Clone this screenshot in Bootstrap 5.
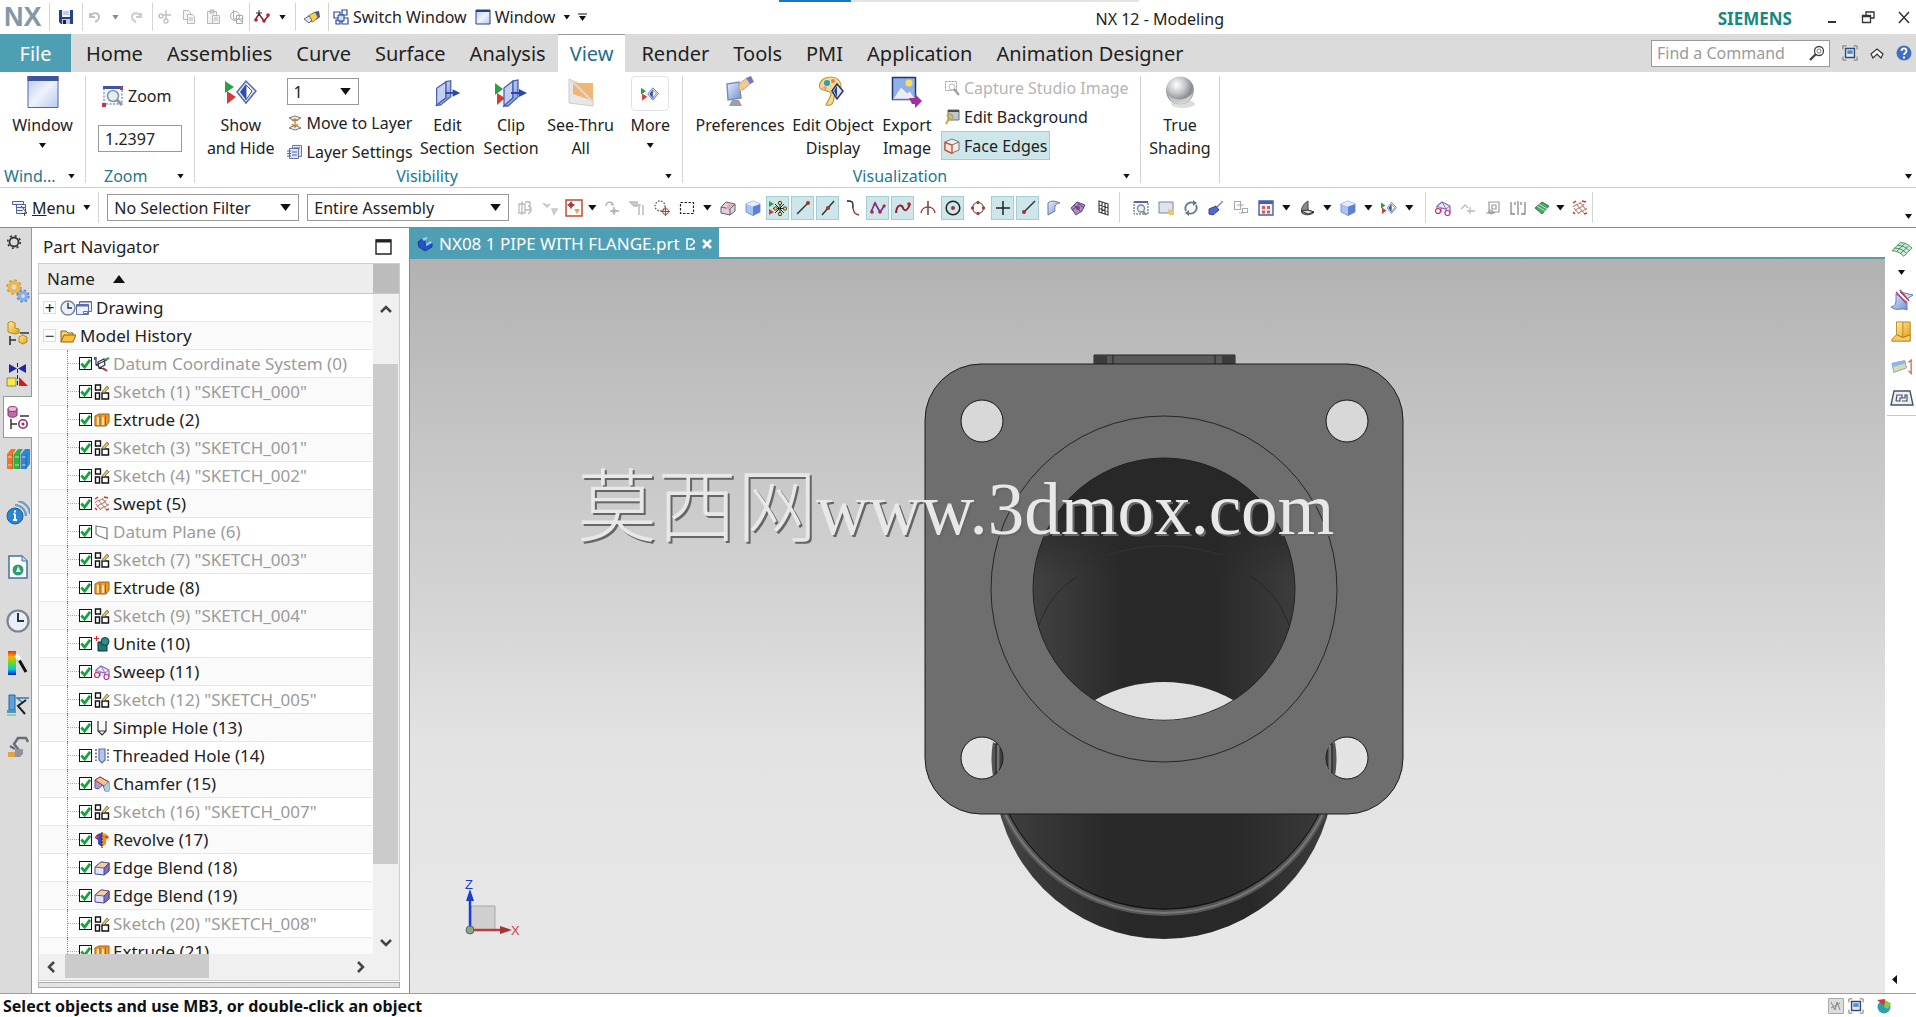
<!DOCTYPE html>
<html lang="en">
<head>
<meta charset="utf-8">
<meta name="viewport" content="width=device-width, initial-scale=1">
<title>NX 12 - Modeling</title>
<link href="https://cdn.jsdelivr.net/npm/bootstrap@5.3.0/dist/css/bootstrap.min.css" rel="stylesheet">
<style>
:root{--teal:#4f9fb4;--ink:#222}
body{font-family:"Noto Sans","Open Sans",sans-serif;font-size:16px;line-height:24px;color:var(--ink);background:#fff;overflow:hidden}
button,input,select{font-family:inherit;font-size:inherit;color:inherit}
button{background:none;border:0;padding:0}
svg{display:block;flex:none}
.i16{width:16px;height:16px}.i24{width:24px;height:24px}.i32{width:32px;height:32px}
.tri{width:9px;height:6px;flex:none;background:#111;clip-path:polygon(0 0,100% 0,50% 100%)}
.tri.sm{width:7px;height:5px}
.off{color:#b4b4b4!important}
.vsep{width:1px;align-self:stretch;background:#d4d4d4;flex:none}
.titlebar{height:34px}
.tb-right{width:692px}
.tb-left .vsep{margin:3px 0}
.qb{width:24px;display:flex;justify-content:center;align-items:center}
.qb.drop{width:17px}
.progress-strip{left:50%;top:0;width:360px;height:2px;margin-left:-179px;background:#e4e4e4}
.progress-strip i{display:block;width:72px;height:2px;background:#1678c2}
.nxlogo{font:700 27px/28px "Liberation Sans",sans-serif;color:#8397a5;width:49px}
.brand{font-weight:700;font-size:17px;color:#17877f}
.tabbar{height:38px;background:#dbdbdb}
.tabbar .nav-link{font-size:20px;line-height:40px;height:38px;padding:0 12px;color:#222;border-radius:0}
.tabbar .file{background:var(--teal);color:#fff;width:71px;padding:0;text-align:center;margin-right:3px}
.tabbar .active{background:#fff;color:#1f6f8b;border-top:1px solid #999;line-height:38px}
.findbox{width:179px;height:27px;border:1px solid #999;background:#fff}
.findbox input{border:0;outline:0;width:140px;padding:0 0 0 5px;background:none}
.findbox input::placeholder{color:#9a9a9a;opacity:1}
.ribbon{height:116px;border-bottom:1px solid #ccd;flex:none}
.rgroup{border-right:1px solid #d4d4d4;margin:4px 0}
.g-window{width:86px}.g-zoom{width:109px}.g-vis{width:488px}.g-visual{width:458px}.g-true{width:79px}
.rbody{height:88px;display:flex}
.rlabel{height:24px;display:flex;align-items:center;color:#23788e;padding:0 10px 0}
.g-zoom .rlabel{padding-left:18px}
.rbtn{display:flex;flex-direction:column;align-items:center;line-height:23px;white-space:nowrap}
.rbtn svg{margin-bottom:6px}
.rbtn .tri{margin-top:6px}
.w60{width:60px}.w64{width:64px}.w76{width:76px}.w88{width:88px}.w98{width:98px}
.laycol{width:138px}
.laycol .nxselect{width:72px;margin:2px 0 3px}
.viscol{margin-top:-3px}
.scalebox{width:84px;margin:auto 0 12px}
.moreicon{width:38px;height:35px;margin-bottom:3px;display:flex;align-items:center;justify-content:center}
.moreicon svg{margin:0}
.lrow{display:flex;align-items:center;gap:4px;height:29px;white-space:nowrap;padding:0 3px}
.lrow.on,.tool.on{background:#cde6ea;outline:1px solid #a6ccd4;outline-offset:-1px}
.nxselect,.nxbox{border:1px solid #999;border-radius:0;height:27px;padding:0 24px 0 6px;background-color:#fff;line-height:24px}
.nxselect{-webkit-appearance:none;appearance:none;background-image:url("data:image/svg+xml,%3Csvg xmlns='http://www.w3.org/2000/svg' viewBox='0 0 12 8'%3E%3Cpath d='M0 0h12L6 8z' fill='%23111'/%3E%3C/svg%3E");background-repeat:no-repeat;background-position:right 7px center;background-size:11px 7px}
.sel-filter{width:192px}.sel-scope{width:202px}
.selbar{height:40px;border-bottom:1px solid #8a8a8a;flex:none}
.tool{width:23px;height:24px;margin:0 1px;display:flex;align-items:center;justify-content:center;flex:none}
.tool.arrow{width:14px}
.selbar .vsep{margin:4px 0}
.work,.minh{min-height:0}
.rail{width:32px;background:#dbdbdb;border-right:1px solid #999;flex:none;padding-top:2px}
.rail button{width:100%;height:42px;display:flex;align-items:center;justify-content:center;flex:none;padding-left:4px}
.rail .gearbtn{height:24px;margin-bottom:16px;padding:0 4px 0 0}
.rail .cur{background:#fff;border:1px solid #999;border-right:0;margin-left:3px;width:29px;padding:0}
.rail .mt-a{margin-top:12px}
.navpanel{width:378px;border-right:1px solid #888;padding:0 9px 5px 6px;flex:none}
.navtitle{height:36px;padding:2px 8px 0 5px;font-size:17px}
.treebox{border:1px solid #ccc}
.treehead{height:30px;background:#ededed;border-bottom:1px solid #c8c8c8;font-size:17px}
.treehead .corner{width:26px;background:#bcbcbc}
.trow{height:28px;display:flex;align-items:center;font-size:17px;border-bottom:1px solid #e6e6e6;white-space:nowrap;flex:none}
.trow:nth-child(even){background:#fafafa}
.rows{min-height:0;overflow:hidden;list-style:none;margin:0;padding:0}
.leaf{padding-left:28px}
.leaf .stub{width:12px;height:28px;border-left:1px dotted #888;background:linear-gradient(90deg,#aaa 50%,transparent 0) 0 50%/2px 1px repeat-x;flex:none}
.leaf label{display:flex;align-items:center}
.leaf label svg{margin:0 3px 0 2px}
.leaf .form-check-input{margin:0;width:13px;height:13px;border:1px solid #111;border-radius:0;background-color:#fff;flex:none}
.leaf .form-check-input:checked{background:#fff url("data:image/svg+xml,%3Csvg xmlns='http://www.w3.org/2000/svg' viewBox='0 0 12 12'%3E%3Cpath d='M1.500 6l3.500 4 6-8' fill='none' stroke='%231ba23e' stroke-width='3'/%3E%3C/svg%3E") center/11px;border-color:#111}
.dim{color:#9b9b9b}
.exp{width:13px;height:13px;border:1px solid #ddd;line-height:9px;display:flex;align-items:center;justify-content:center;background:#fff}
.vscroll{width:26px;background:#f0f0f0;flex:none}
.vscroll .thumb{height:500px;background:#cbcbcb;margin:40px 1px 0 0}
.vscroll button,.hscroll button{display:flex;align-items:center;justify-content:center;width:26px;flex:none}
.hscroll{height:26px;background:#f0f0f0}
.hscroll .thumb{width:144px;background:#cbcbcb;height:24px}
.footbar{height:6px;border:1px solid #aaa;background:#e4e4e4;margin-top:1px;flex:none}
.doctabs{height:31px;border-bottom:2px solid #5f98a8;flex:none}
.doctab{background:var(--teal);color:#fff;padding:0 7px;gap:6px;height:31px;display:flex;align-items:center;text-decoration:none;font-size:17px}
.scene{background:linear-gradient(#b2b2b2,#c6c6c6 26%,#d4d4d4 47%,#e3e3e3 66%,#e8e8e8);min-height:0;flex:1 1 0}
.scene svg{width:100%;height:100%}
.mark-text{fill:#e8e8e8;filter:drop-shadow(2px 2px 0 #666)}
.siderail{width:31px;flex:none;padding:7px 0 0 2px}
.siderail button{height:27px;width:100%;display:flex;align-items:center;justify-content:center;flex:none}
.statusbar{height:24px;border-top:1px solid #a29aa0;flex:none;padding-left:3px}
.statusbar b{font-size:16px;line-height:22px;color:#111}
</style>
</head>
<body class="d-flex flex-column vh-100">
<svg width="0" height="0" class="position-absolute" aria-hidden="true">
<defs>
<linearGradient id="gw" x1="0" y1="0" x2="1" y2="1"><stop offset="0" stop-color="#b9c9ee"/><stop offset=".5" stop-color="#eef3fb"/><stop offset="1" stop-color="#b9c9ee"/></linearGradient>
<linearGradient id="gb" x1="0" y1="0" x2="1" y2="1"><stop offset="0" stop-color="#e8f0ff"/><stop offset="1" stop-color="#6f8fd8"/></linearGradient>
<linearGradient id="gy" x1="0" y1="0" x2="1" y2="1"><stop offset="0" stop-color="#ffe9a0"/><stop offset="1" stop-color="#e6a21a"/></linearGradient>
<radialGradient id="gs" cx=".38" cy=".3" r=".7"><stop offset="0" stop-color="#fff"/><stop offset=".45" stop-color="#c2c6ca"/><stop offset=".8" stop-color="#85898c"/><stop offset="1" stop-color="#b9bcbf"/></radialGradient>
<linearGradient id="bore" x1="0" x2="1"><stop offset="0" stop-color="#414141"/><stop offset=".14" stop-color="#383838"/><stop offset=".34" stop-color="#292929"/><stop offset=".7" stop-color="#292929"/><stop offset="1" stop-color="#3c3c3c"/></linearGradient>
<linearGradient id="boretop" x1="0" y1="0" x2="0" y2="1"><stop offset="0" stop-color="#282828"/><stop offset=".2" stop-color="#282828"/><stop offset=".45" stop-color="#282828" stop-opacity="0"/></linearGradient>
<linearGradient id="rim" x1="0" x2="1"><stop offset="0" stop-color="#4a4a4a"/><stop offset=".14" stop-color="#383838"/><stop offset=".4" stop-color="#282828"/><stop offset=".75" stop-color="#282828"/><stop offset="1" stop-color="#3e3e3e"/></linearGradient>
<linearGradient id="rain" x1="0" y1="0" x2="0" y2="1"><stop offset="0" stop-color="#f02a10"/><stop offset=".25" stop-color="#ffb000"/><stop offset=".5" stop-color="#58e020"/><stop offset=".75" stop-color="#10c8e8"/><stop offset="1" stop-color="#1020c0"/></linearGradient>
<symbol id="save" viewBox="0 0 16 16"><path d="M1 1h14v14H3l-2-2z" fill="#27408b"/><path d="M4 1h8v7H4z" fill="#eef3ff"/><path d="M5 3h6M5 5h6" stroke="#9ab"/><path d="M4 10h8v5H4z" fill="#c6cbd6"/><path d="M5 11h3v4H5z" fill="#223"/></symbol>
<symbol id="undo" viewBox="0 0 16 16"><path d="M3 9V4M3 8h5M3 8c2-5 9-5 9 0 0 3-2 4-4 5" fill="none" stroke="#c0c0c0" stroke-width="2"/></symbol>
<symbol id="redo" viewBox="0 0 16 16"><path d="M13 9V4M13 8H8M13 8c-2-5-9-5-9 0 0 3 2 4 4 5" fill="none" stroke="#ccc" stroke-width="2"/></symbol>
<symbol id="cut" viewBox="0 0 16 16"><g fill="none" stroke="#c2c2c2" stroke-width="1.500"><path d="M9 1v9M14 6H5"/><circle cx="4" cy="7" r="2"/><circle cx="9" cy="12" r="2"/></g></symbol>
<symbol id="copy" viewBox="0 0 16 16"><g fill="#f5f5f5" stroke="#b8b8b8"><path d="M2.500 1.500h5l2 2v7h-7z"/><path d="M6.500 5.500h5l2 2v7h-7z"/><path d="M8 9h4M8 11h4"/></g></symbol>
<symbol id="paste" viewBox="0 0 16 16"><g fill="#f2f2f2" stroke="#b8b8b8"><path d="M2.500 2.500h9v12h-9z"/><path d="M5 1h4v3H5z" fill="#ccc"/><path d="M7.500 6.500h7v8h-7z"/><path d="M9 9h4M9 11h4"/></g></symbol>
<symbol id="cp2" viewBox="0 0 16 16"><g fill="none" stroke="#a8a8a8"><path d="M4.500 1v9h10M7.500 6.500h6v8h-6z"/><circle cx="6" cy="7" r="4.500"/><path d="m9 9 4 4"/></g></symbol>
<symbol id="spline" viewBox="0 0 16 16"><path d="M1 11 5 5l5 7 5-6" fill="none" stroke="#7a2030" stroke-width="1.500"/><path d="M5 1v6M2 4h6" stroke="#222"/><g fill="#c02030"><circle cx="2" cy="11" r="1.800"/><circle cx="10" cy="12" r="1.800"/><circle cx="14" cy="6" r="1.800"/></g></symbol>
<symbol id="spl2" viewBox="0 0 16 16"><path d="M1 12 5 3l5 9 5-7" fill="none" stroke="#6a2ca0" stroke-width="1.600"/><g fill="#c02030"><circle cx="2" cy="12" r="1.800"/><circle cx="5" cy="4" r="1.500"/><circle cx="10" cy="12" r="1.800"/><circle cx="14" cy="6" r="1.600"/></g></symbol>
<symbol id="tag" viewBox="0 0 16 16"><path d="m10 3 5-1 1 6-4 3z" fill="#3951b0"/><path d="m4 7 7-4 3 5-5 5-3-1z" fill="#f4cf50" stroke="#7c6420" stroke-width=".8"/><path d="m0 10 5-3 3 4-3 3z" fill="#dfe5f5" stroke="#667"/></symbol>
<symbol id="switch" viewBox="0 0 16 16"><g fill="#fff" stroke="#2c4a9a" stroke-width="1.200"><path d="M1 3h6v6H1zM9 1h5v5H9zM9 9h6v6H9zM3 11h4v4H3z"/></g><path d="M5 6h6v6H5z" fill="#cfe0fa" stroke="#1a3a9a"/></symbol>
<symbol id="win" viewBox="0 0 16 16"><path d="M1 1h14v14H1z" fill="url(#gw)" stroke="#27408b"/><path d="M1 1h14v2H1z" fill="#27408b"/></symbol>
<symbol id="winbig" viewBox="0 0 32 32"><path d="M1 .5h30v31H1z" fill="url(#gw)" stroke="#4a64ae"/><path d="M.500 0h31v5H.500z" fill="#3b55a0"/></symbol>
<symbol id="zoomb" viewBox="0 0 22 22"><path d="M2 2h18v17H2z" fill="#f6f9ff" stroke="#4d6fd0" stroke-dasharray="2 1.500"/><path d="M1 1h20v3H1z" fill="#3b55a0"/><circle cx="11" cy="11" r="5.500" fill="#e5eef2" stroke="#8d969c" stroke-width="1.600"/><path d="m15 15 5 5" stroke="#8d969c" stroke-width="3"/><path d="M0 18h4v4H0zM18 2h3v3h-3z" fill="#cc3344"/></symbol>
<symbol id="shade" viewBox="0 0 32 32"><path d="M0 5l9 6-9 6z" fill="#2da043"/><path d="M2 15l9 6-9 7z" fill="#d83a3a"/><path d="M12 16 21 5l10 10-10 12z" fill="#dce6f8" stroke="#5a6aa6" stroke-width="1.500"/><path d="m15 16 6-8v16z" fill="#2b4fa8"/><path d="m21 9 6 6-6 9z" fill="#fff" stroke="#4a5a96"/></symbol>
<symbol id="mvl" viewBox="0 0 16 16"><g fill="#f2ecdf" stroke="#777"><path d="m2 3 6-2 6 2-6 3zM2 13l6-3 6 3-6 2z"/></g><path d="M8 4v7M5 6l3-2 3 2M5 9l3 3 3-3" fill="none" stroke="#b98740" stroke-width="1.300"/></symbol>
<symbol id="lay" viewBox="0 0 16 16"><g fill="#dfe6f8" stroke="#6478b0"><path d="M5.500 1.500h9v11h-9z"/><path d="M2.500 4.500h9v10h-9z"/></g><path d="M0 7h4M0 9.500h4M0 12h4M5 8h5M5 11h5M7 4h6" stroke="#4d5f98"/></symbol>
<symbol id="edsec" viewBox="-3 -3 34 32"><path d="M3 9 13 2v17L3 27z" fill="#c2d0f2" stroke="#4a5fae" stroke-width="1.300"/><path d="m13 2 5-1v17l-11 9H3l10-8z" fill="url(#gb)" stroke="#4a5fae" stroke-width="1.300"/><path d="M12 14h10" stroke="#2b48a6" stroke-width="2"/><path d="m20 10 8 4-8 4z" fill="#2b48a6"/></symbol>
<symbol id="clsec" viewBox="0 -3 32 32"><path d="M0 4l8 6-8 6z" fill="#2da043"/><path d="M2 14l8 5-8 7z" fill="#d83a3a"/><path d="M9 9 18 2v17L9 27z" fill="#c2d0f2" stroke="#4a5fae" stroke-width="1.300"/><path d="m18 2 5-1v17l-10 9H9l9-8z" fill="url(#gb)" stroke="#4a5fae" stroke-width="1.300"/><path d="M16 14h9" stroke="#2b48a6" stroke-width="2"/><path d="m24 10 8 4-8 4z" fill="#2b48a6"/></symbol>
<symbol id="seeth" viewBox="-2 -2 32 32"><path d="m2 1 6 3v12l18 5v7L2 25z" fill="#e9e7e6" stroke="#cfcaca"/><path d="M6 3 12 5h14v18L6 16z" fill="#f1b673"/><path d="m5 3 21 21" stroke="#e2d8d0" stroke-width="2"/></symbol>
<symbol id="pref" viewBox="0 0 32 32"><path d="m3 8 12-2 2 16-13 2z" fill="url(#gb)" stroke="#7f8fb4" stroke-width="1.500"/><path d="M8 24h7l3 6H5z" fill="#9a9fa8"/><path d="m15 8 8-6 4 5-7 6-5 2z" fill="#f2c795" stroke="#c8a070"/><path d="m22 2 5-2 3 6-4 2z" fill="#6d79c8"/></symbol>
<symbol id="palette" viewBox="0 0 32 32"><path d="M14 1C5 1 1 8 3 12c2 3 7 2 10 4 3 2-1 6-4 13 6 2 8-3 8-8 6-2 7-6 7-11S20 1 14 1z" fill="#f4dc8e" stroke="#c29a45" stroke-width="1.200"/><circle cx="10" cy="7" r="3" fill="#2aa0ba"/><circle cx="16" cy="5" r="2" fill="#e8805a"/><circle cx="8" cy="12" r="2" fill="#f19a9a"/><path d="m15 15 5-7 6 7-6 8z" fill="#dde6f8" stroke="#27336e" stroke-width="1.500"/><path d="m17 15 3-5v11z" fill="#27408b"/></symbol>
<symbol id="export" viewBox="0 0 32 32"><path d="M1.500 1.500h23v22h-23z" fill="#8fb0ea" stroke="#26356b" stroke-width="1.500"/><circle cx="18" cy="7" r="3.500" fill="#fae055"/><path d="m2 23 8-12 6 6 3-2 5 8z" fill="#e9edf6" stroke="#aab2cc"/><path d="M18 22h6v-4l7 7-7 7v-4h-3z" fill="#a02ca6"/></symbol>
<symbol id="capt" viewBox="0 0 16 16"><path d="M1.500 1.500h11v9h-11z" fill="none" stroke="#999" stroke-dasharray="2 1"/><circle cx="8" cy="7" r="3" fill="none" stroke="#bbb"/><path d="m10 9 5 6" stroke="#999" stroke-width="2"/></symbol>
<symbol id="editbg" viewBox="0 0 16 16"><path d="M4 1h11v10H4z" fill="#bcc7d4" stroke="#67717e"/><path d="M4 1h11v2H4z" fill="#4a4f5a"/><path d="m2 15 4-7M3 7a3 3 0 1 1 4 4" fill="none" stroke="#d0a830" stroke-width="2"/></symbol>
<symbol id="facee" viewBox="0 0 16 16"><path d="m1 4 7-3 7 3v8l-7 3-7-3z" fill="#f0eee9" stroke="#777"/><path d="M1 4.500 8 7v8.500L1 12z" fill="#fbe9df" stroke="#c6553a" stroke-width="1.400"/><path d="m8 7 7-3" stroke="#777"/></symbol>
<symbol id="sphere" viewBox="0 0 32 32"><ellipse cx="19" cy="28" rx="12" ry="4" fill="#ddd"/><circle cx="16" cy="14.500" r="14" fill="url(#gs)"/><path d="M4 19c6 6 17 6 24-1-2 6-6 10-12 10S6 25 4 19z" fill="#eee" opacity=".6"/></symbol>
<symbol id="mag" viewBox="0 0 16 16"><circle cx="10" cy="6" r="4.500" fill="none" stroke="#444" stroke-width="1.300"/><circle cx="10" cy="6" r="2" fill="none" stroke="#777"/><path d="m7 9-6 6" stroke="#444" stroke-width="2.400"/></symbol>
<symbol id="full" viewBox="0 0 18 18"><path d="M1 5V1h4M13 1h4v4M17 13v4h-4M5 17H1v-4" fill="none" stroke="#7a6a50"/><path d="M4 4h10v10H4z" fill="#e6edf8" stroke="#334b77" stroke-width="1.600"/><path d="M6 6h6v4H6z" fill="#5588cc"/></symbol>
<symbol id="help" viewBox="0 0 16 16"><circle cx="8" cy="8" r="7.500" fill="#3f6fc0"/><path d="M5.500 6c0-3.500 5-3.500 5 0 0 2-2.500 2-2.500 4" fill="none" stroke="#fff" stroke-width="1.800"/><path d="M7 11.500h2v2H7z" fill="#fff"/></symbol>
<symbol id="menu" viewBox="0 0 16 16"><g fill="#eef" stroke="#556290"><path d="M.500 1.500h11v3H.500zM4.500 4.500h9v3h-9zM4.500 7.500h9v3h-9zM4.500 10.500h9v3h-9z"/></g><path d="m9 6 6 7-3 0 1 3" fill="#fff" stroke="#333"/></symbol>
<symbol id="gA" viewBox="0 0 16 16"><path d="M2 4h6v9H2zM8 2h5v8H8M5 1v14M11 6c4 0 4 6 0 8" fill="none" stroke="#bbb" stroke-width="1.300"/></symbol>
<symbol id="gB" viewBox="0 0 16 16"><path d="m1 3 4 4 3-3M10 9h5l-3 5z" fill="#ddd" stroke="#c4c4c4" stroke-width="1.500"/></symbol>
<symbol id="selp" viewBox="0 0 18 18"><path d="M1 1h16v16H1z" fill="#fff" stroke="#d0452c" stroke-width="1.500"/><path d="M6 2.500v7M2.500 6h7" stroke="#a03030" stroke-width="1.500"/><circle cx="6" cy="6" r="2" fill="none" stroke="#a03030"/><path d="M9 10h6l-3 5z" fill="#f0a040"/></symbol>
<symbol id="gC" viewBox="0 0 16 16"><path d="M2 6c0-5 7-5 7-1l-2-1M10 7v8M6 11h9" fill="none" stroke="#aaa" stroke-width="1.300"/><circle cx="10" cy="11" r="2" fill="none" stroke="#bbb"/></symbol>
<symbol id="gD" viewBox="0 0 16 16"><path d="M1 2h7v4H5zM10 5v10M14 5v10M8 5h4" fill="#ccc" stroke="#bbb" stroke-width="1.500"/></symbol>
<symbol id="lasso" viewBox="0 0 16 16"><circle cx="6" cy="6" r="5" fill="none" stroke="#555" stroke-dasharray="1.500 1.500" stroke-width="1.300"/><circle cx="11.500" cy="11.500" r="3" fill="none" stroke="#a84436"/><path d="M11.500 7v9M7 11.500h9" stroke="#a84436"/></symbol>
<symbol id="marq" viewBox="0 0 16 16"><path d="M1.500 2.500h13v11h-13z" fill="none" stroke="#222" stroke-dasharray="2.500 1.500" stroke-width="1.200"/></symbol>
<symbol id="cubeg" viewBox="0 0 16 16"><path d="m1 7 5-5 9 2v7l-5 4-9-2z" fill="#d9d4da" stroke="#665d66"/><path d="m1 7 9 2 5-5M10 9v6" fill="none" stroke="#665d66"/><path d="m6 9 2-5 5 1-3 4z" fill="#e6aab4"/></symbol>
<symbol id="cubeb" viewBox="0 0 16 16"><path d="m1 4 7-3 7 3v8l-7 3.500L1 12z" fill="#aac3f2" stroke="#7a94d0"/><path d="m8 6.500 7-2.500v8l-7 3.500z" fill="#5d80d2"/><path d="m1 4 7-3 7 3-7 2.500z" fill="#e4edfd"/></symbol>
<symbol id="snap" viewBox="0 0 18 18"><path d="M0 2l5 3-5 3z" fill="#2da043"/><path d="M0 10l5 3-5 3z" fill="#d83a3a"/><path d="M11 2v15M4 9.500h14M6 5l9 9M15 5l-9 9" stroke="#222"/><g fill="#f3d84a" stroke="#222" stroke-width=".8"><circle cx="11" cy="4" r="1.700"/><circle cx="16" cy="9.500" r="1.700"/><circle cx="11" cy="15" r="1.700"/><circle cx="6.500" cy="9.500" r="1.700"/></g></symbol>
<symbol id="ln1" viewBox="0 0 16 16"><path d="M2 14 13 3" stroke="#333" stroke-width="1.400"/><circle cx="13" cy="3" r="2" fill="#a83232"/></symbol>
<symbol id="ln2" viewBox="0 0 16 16"><path d="M2 15 14 1" stroke="#333" stroke-width="1.400"/><circle cx="8" cy="8" r="2" fill="#a83232"/></symbol>
<symbol id="ln3" viewBox="0 0 16 16"><path d="M3 13 15 1" stroke="#333" stroke-width="1.400"/><circle cx="4" cy="12" r="2" fill="#a83232"/></symbol>
<symbol id="cv1" viewBox="0 0 16 16"><path d="M2 1c8 0 5 3 6 7s1 6 6 7" fill="none" stroke="#a83232" stroke-width="1.400"/><path d="M2 1c8 0 5 3 6 7" fill="none" stroke="#444" stroke-width="1.400"/></symbol>
<symbol id="cv2" viewBox="0 0 16 16"><path d="M1 13c1-10 6-8 7-5s4 4 7-4" fill="none" stroke="#8a2030" stroke-width="2"/><circle cx="14" cy="4" r="1.800" fill="#c02030"/></symbol>
<symbol id="crs" viewBox="0 0 16 16"><path d="M8 1v14" stroke="#333" stroke-width="1.300"/><path d="M1 13c1-8 13-8 14 0" fill="none" stroke="#a83232" stroke-width="1.400"/></symbol>
<symbol id="cir" viewBox="0 0 16 16"><circle cx="8" cy="8" r="6.800" fill="none" stroke="#222" stroke-width="1.500"/><circle cx="8" cy="8" r="2" fill="#a83232"/></symbol>
<symbol id="quad" viewBox="0 0 16 16"><circle cx="8" cy="8" r="5.500" fill="none" stroke="#666" stroke-width="1.200"/><g fill="#b43a30"><circle cx="8" cy="2.500" r="1.700"/><circle cx="8" cy="13.500" r="1.700"/><circle cx="2.500" cy="8" r="1.700"/><circle cx="13.500" cy="8" r="1.700"/></g></symbol>
<symbol id="plus" viewBox="0 0 16 16"><path d="M8 1v14M1 8h14" stroke="#222" stroke-width="1.500"/></symbol>
<symbol id="face" viewBox="0 0 16 16"><path d="M3 3c3-3 8-2 12 0-4 0-6 3-5 8l-7 4z" fill="url(#gb)" stroke="#66779f"/></symbol>
<symbol id="fac2" viewBox="0 0 16 16"><path d="m1 8 6-6 8 3-3 6-6 4z" fill="#9d8fd0" stroke="#5a4a80"/><path d="m4 5 7 7M8 3l6 5M2 10l8-6" stroke="#5a4a80"/><circle cx="8" cy="8" r="2" fill="#b33"/></symbol>
<symbol id="grid" viewBox="0 0 16 16"><path d="M4 1l9 3v11l-9-3zM7 2v11M10 3v11M4 5l9 3M4 8.500l9 3" fill="none" stroke="#444" stroke-width="1.200"/></symbol>
<symbol id="fit" viewBox="0 0 16 16"><path d="M1 2h14v12H1z" fill="#f3f6fc" stroke="#555" stroke-dasharray="2 1"/><path d="M1 1h14v2H1z" fill="#5a6696"/><circle cx="8" cy="8.500" r="3.500" fill="#e8f2f6" stroke="#7d8a92" stroke-width="1.300"/><path d="m10 11 3 4" stroke="#7d8a92" stroke-width="2"/></symbol>
<symbol id="pic" viewBox="0 0 16 16"><path d="M1 2h14v11H1z" fill="#dfe3ec" stroke="#7e828e"/><path d="m10 9 5 1 1 5-5 0z" fill="#edc565"/></symbol>
<symbol id="rot" viewBox="0 0 16 16"><path d="M3 11a6 6 0 0 1 8-8M13 5a6 6 0 0 1-8 8" fill="none" stroke="#5e7890" stroke-width="1.800"/><path d="m10 0 4 3-4 3zM6 10l-4 3 4 3z" fill="#5e7890"/></symbol>
<symbol id="pan" viewBox="0 0 16 16"><path d="m1 9 7-3 3 4-6 5-4-1z" fill="#5268c8" stroke="#34469a"/><path d="m9 7 5-5" stroke="#889" stroke-width="1.500"/><circle cx="14" cy="2" r="1.300" fill="#aab"/></symbol>
<symbol id="gE" viewBox="0 0 16 16"><path d="M1.500 1.500h6v8h-6zM9.500 8.500h5v4h-5zM4 5h7M6 13h5" fill="none" stroke="#aaa" stroke-width="1.200"/></symbol>
<symbol id="vw" viewBox="0 0 16 16"><path d="M1 1h14v14H1z" fill="#eef2fc" stroke="#4a5fa8" stroke-width="1.400"/><path d="M1 1h14v3H1z" fill="#4a5fa8"/><path d="M4 6h3v3H4zM9 6h3v3H9zM4 10.500h3v3H4zM9 10.500h3v3H9z" fill="#d85a50"/></symbol>
<symbol id="half" viewBox="0 0 16 16"><path d="M9 1v9l6 2c-2 3-9 4-12 1-2-4 2-10 6-12z" fill="#8a8a8a" stroke="#444"/><path d="m2 11 7-1 6 2-6 2z" fill="#d8d8d8" stroke="#333"/></symbol>
<symbol id="pipe" viewBox="0 0 16 16"><path d="M2 12V6l5-4 8 4v7M6 12V8l5 1v5" fill="#eee8fa" stroke="#7470b4" stroke-width="1.200"/><path d="m7 2 4 7 4-3M2 6l4 2" fill="none" stroke="#9a6fc0"/><circle cx="3" cy="11" r="2.500" fill="#fff" stroke="#d02c50" stroke-width="1.200"/><circle cx="12.500" cy="13" r="2.500" fill="#fff" stroke="#d02c80" stroke-width="1.200"/></symbol>
<symbol id="gF" viewBox="0 0 16 16"><path d="m1 9 4-4 3 3M10 7v7M7 11h8" fill="none" stroke="#bbb" stroke-width="1.300"/></symbol>
<symbol id="gG" viewBox="0 0 16 16"><path d="M4 2h10v10H4zM1 13h9M7 5h4v4H7z" fill="none" stroke="#999" stroke-width="1.200"/><circle cx="6" cy="12" r="2" fill="none" stroke="#999"/></symbol>
<symbol id="gH" viewBox="0 0 16 16"><path d="M1 2v12h4M15 2v12h-4M8 1v14M5 2v3M11 2v3" fill="none" stroke="#888" stroke-width="1.300"/></symbol>
<symbol id="green" viewBox="0 0 16 16"><path d="m1 8 7-6 7 4-7 8z" fill="#4aa868" stroke="#2f7a48"/><path d="m3 6 8 5M5 4l8 5" stroke="#bfe5c8"/></symbol>
<symbol id="swept" viewBox="0 0 16 16"><g fill="none" stroke="#b08878" stroke-width="1.100"><path d="M1 7c2-4 6-1 8-5M3 11c3-5 6-1 9-7M6 14c2-4 6-2 9-6M4 4l8 9M8 2l6 8M2 8l5 6"/></g><path d="m1 3 3-2M12 14l3-1M10 1l4 1M1 12l2 2" stroke="#d03030" stroke-width="1.500"/></symbol>
<symbol id="sketch" viewBox="0 0 16 16"><g fill="#fff" stroke="#111" stroke-width="1.400"><path d="M1.500 1h5v5h-5zM1.500 9h4v6h-4zM8 9h6.500v6H8z"/></g><path d="m8 8 5-6 2 2-5 5z" fill="#edc050" stroke="#665" stroke-width=".8"/></symbol>
<symbol id="extr" viewBox="0 0 16 16"><path d="M1 4 5 2h10v8l-3 4H1z" fill="#f19a2d" stroke="#a65c14"/><path d="M3 5h2v8H3zM8 5h2v8H8z" fill="#ffe7a8"/><path d="M6 3v10M11.500 3v10" stroke="#a65c14"/></symbol>
<symbol id="csys" viewBox="0 0 16 16"><path d="M2 1v8l9 5M2 9l11-5M4 6l6-3 1 6-6 3z" fill="none" stroke="#334" stroke-width="1.200"/><path d="M1 1v3" stroke="#36c" stroke-width="2"/><path d="m9 12 4 3" stroke="#c33" stroke-width="2"/><path d="m11 4 4-2" stroke="#2a4" stroke-width="2"/></symbol>
<symbol id="plane" viewBox="0 0 16 16"><path d="m2 2 11 2v11l-8-3-3-2z" fill="#fff" stroke="#777" stroke-width="1.200"/></symbol>
<symbol id="unite" viewBox="0 0 16 16"><path d="M4 6h9v9H4z" fill="#1a7a70" stroke="#134"/><circle cx="11" cy="5.500" r="4" fill="#2c8f84" stroke="#134"/><path d="M2.500 0v5M0 2.500h5" stroke="#d22"/></symbol>
<symbol id="hole" viewBox="0 0 16 16"><path d="M4 1v10l4 4 4-4V1M4 11h8" fill="none" stroke="#333" stroke-width="1.200"/></symbol>
<symbol id="thole" viewBox="0 0 16 16"><path d="M5 1v11l3 3 3-3V1z" fill="#b4c4ec" stroke="#5870b0" stroke-width="1.200"/><path d="M2 1v12M14 1v12" stroke="#445" stroke-dasharray="2 1.500" stroke-width="1.300"/></symbol>
<symbol id="chamf" viewBox="0 0 16 16"><path d="m1 4 5-3 9 5v9l-4 0L9 9l-5 4-3-1z" fill="#a99bd0" stroke="#66568a"/><path d="m1 4 5-3 9 5-5 4z" fill="#edc596" stroke="#a33"/><path d="m10 10 5-4v9l-4 0z" fill="#9fd0f2"/></symbol>
<symbol id="revol" viewBox="0 0 16 16"><path d="M8 1c-4 0-7 3-7 5l3 2v4l4 3z" fill="#3a48c0"/><path d="M8 1c4 0 7 3 7 5l-3 2v4l-4 3z" fill="#f0902a"/><path d="M8 0v16" stroke="#222" stroke-dasharray="2 1"/><path d="M2 5h3M11 5h3" stroke="#e33" stroke-width="2"/></symbol>
<symbol id="blend" viewBox="0 0 16 16"><path d="m1 7 6-5 8 1v8l-5 4-9-1z" fill="#dfe3fa" stroke="#4c4894"/><path d="m1 7 6-5 8 1-5 5z" fill="#f3cfa4" stroke="#7a5a80"/><path d="m10 8 5-5v8l-5 4z" fill="#7671d0" stroke="#4c4894"/></symbol>
<symbol id="clock" viewBox="0 0 24 24"><circle cx="12" cy="12" r="10.500" fill="#e9eef7" stroke="#7a8392" stroke-width="2.200"/><path d="M12 4v8h6" fill="none" stroke="#234" stroke-width="2"/></symbol>
<symbol id="sheets" viewBox="0 0 16 16"><g fill="#eaeffc" stroke="#5d6ea6"><path d="M3.500 1.500h12v10h-12z"/><path d="M.500 4.500h12v10H.500z"/></g><path d="M3.500 1.500h12v1h-12zM.500 4.500h12v2H.500z" fill="#5d6ea6"/><path d="M7.500 11.500h4v2h-4z" fill="#fff" stroke="#5d6ea6"/></symbol>
<symbol id="folder" viewBox="0 0 16 14"><path d="M1 13V2h5l2 2h5v3" fill="#f5d36a" stroke="#8a6512"/><path d="m1 13 3-7h12l-3 7z" fill="#fbc13a" stroke="#8a6512"/></symbol>
<symbol id="gear" viewBox="0 0 16 16"><circle cx="8" cy="8" r="4.500" fill="none" stroke="#333" stroke-width="1.800"/><circle cx="8" cy="8" r="6.300" fill="none" stroke="#333" stroke-width="1.600" stroke-dasharray="2 2.950"/></symbol>
<symbol id="gears" viewBox="0 0 24 24"><circle cx="8" cy="8" r="4.500" fill="none" stroke="#edb54e" stroke-width="4"/><circle cx="8" cy="8" r="7" fill="none" stroke="#d09a34" stroke-width="1.600" stroke-dasharray="2.800 2.700"/><circle cx="17" cy="17" r="3.600" fill="none" stroke="#86aee8" stroke-width="3.200"/><circle cx="17" cy="17" r="5.800" fill="none" stroke="#5e88c8" stroke-width="1.600" stroke-dasharray="2.500 2.050"/></symbol>
<symbol id="asm" viewBox="0 0 24 24"><g fill="url(#gy)" stroke="#b58912"><path d="M2 2l3-2 4 2v5l4 1v4l-4 1-7-2z"/><path d="m13 16 4-2 4 2v5l-4 2-4-2z"/></g><path d="M4 15v9M4 19h6M14 12h9" stroke="#333" stroke-width="1.600"/></symbol>
<symbol id="cons" viewBox="0 0 24 24"><path d="m3 1 8 4.500L3 10zM20 1l-8 4.500 8 4.500z" fill="#1c2aa0"/><path d="M1 15h9v8H1z" fill="#ffe840" stroke="#886"/><path d="M13 14l9 9h-9z" fill="#d31c1c"/><path d="M11.500 0v24" stroke="#222" stroke-dasharray="4 2"/></symbol>
<symbol id="part" viewBox="0 0 24 24"><path d="M2 4v6c0 3 9 3 9 0V4" fill="#c668a8" stroke="#7c3068"/><ellipse cx="6.500" cy="4" rx="4.500" ry="2.500" fill="#eab8dc" stroke="#7c3068"/><path d="M5 14v10M5 19h6M14 11h9" stroke="#333" stroke-width="1.500"/><circle cx="17" cy="19" r="4.200" fill="#fff" stroke="#902c6c" stroke-width="1.600"/><circle cx="17" cy="19" r="1.500" fill="#902c6c"/></symbol>
<symbol id="books" viewBox="0 0 24 24"><path d="m1 7 4-5h5l-3 5v15H1z" fill="#ef7424"/><path d="m8 7 4-5h5l-3 5v15H8z" fill="#2fb240"/><path d="m15 7 4-5h5v15l-4 5h-5z" fill="#2f86d8"/><path d="M2 10h4M2 18h4M9 10h4M9 18h4M16 10h4M16 18h4" stroke="#fff" opacity=".7"/><path d="M7 7v15M14 7v15M20 7v15" stroke="#246" opacity=".6"/></symbol>
<symbol id="info" viewBox="0 0 24 24"><circle cx="9" cy="15" r="8" fill="#2b86d0" stroke="#1c5e9e"/><path d="M9 13v6M7 19h4M7.500 13H9M9 9.500v2" stroke="#fff" stroke-width="2"/><path d="M9 4c6 0 11 5 11 11M12 0c7 1 12 7 12 13" fill="none" stroke="#6f98c4" stroke-width="2.200"/></symbol>
<symbol id="page" viewBox="0 0 24 24"><path d="M3 1h13l5 5v17H3z" fill="#fff" stroke="#3e71a8" stroke-width="1.500"/><path d="M16 1v5h5" fill="#cde" stroke="#3e71a8"/><circle cx="12" cy="15" r="5.500" fill="#2f9a74"/><path d="m12 11 3 6h-5z" fill="#d9f4e2"/></symbol>
<symbol id="rainb" viewBox="0 0 24 24"><path d="M2 0h8v24H2z" fill="url(#rain)"/><path d="m12 7 8 14" stroke="#111" stroke-width="3"/><path d="m10 4 4 5" stroke="#fff" stroke-width="4"/></symbol>
<symbol id="mach" viewBox="0 0 24 24"><path d="M3 2h6v15H3z" fill="#5da0da" stroke="#27659c"/><path d="M1 17h9v3H1z" fill="#4d93d0"/><path d="M1 21h9v2H1z" fill="#97cc8c"/><path d="M23 5H11l5 4" fill="none" stroke="#3877b0" stroke-width="1.500"/><path d="m20 7-8 6 7 8" fill="none" stroke="#222" stroke-width="2"/></symbol>
<symbol id="robot" viewBox="0 0 24 24"><path d="M11 3h9l2 4M12 3 8 9l5 6M9 14l-5-3" fill="none" stroke="#666c78" stroke-width="2.400"/><path d="M2 17h8v5H2z" fill="#e0a24a"/><path d="M9 14h8v5l-3 3h-5z" fill="#8c94a4"/></symbol>
<symbol id="prt" viewBox="0 0 16 16"><path d="m1 6 4-3 3 2v4l7-2v4l-7 4-6-4z" fill="#1f55c8" stroke="#1a3c98"/><path d="m5 3 4-2 2 1-4 3zM9 8l5-3 1 2-6 3z" fill="#a8c8ff"/></symbol>
<symbol id="s1" viewBox="0 0 24 20"><path d="m1 12 9-9c5 0 9 2 13 6l-9 9C10 14 6 12 1 12z" fill="#cfe9d6" stroke="#3a8a5a"/><path d="M4 9c5 0 10 2 13 6M7 6c5 0 10 2 13 6M6 13l9-9M10 15l9-8" fill="none" stroke="#3a8a5a"/></symbol>
<symbol id="s2" viewBox="0 0 24 24"><path d="m6 5 11 8v8c-5-3-10 2-16-3 6-1 5-6 5-13z" fill="url(#gb)" stroke="#5f7cc0"/><path d="m10 3 13 3-6 4z" fill="#cdd9f4" stroke="#5f7cc0"/><path d="m10 1 9 11M6 3l10 11" stroke="#c83c50" stroke-width="1.500"/></symbol>
<symbol id="s3" viewBox="0 0 24 24"><path d="M6 1h15v14l-8 3-7-3z" fill="url(#gy)" stroke="#b58a20"/><path d="m1 20 5-5 7 3 8-3v7H1z" fill="#f5cc62" stroke="#b5701c"/><path d="M13 1v17" stroke="#b58a20"/></symbol>
<symbol id="s4" viewBox="0 0 24 20"><path d="m1 6 14-3 2 8-14 5z" fill="#d4dcb0" stroke="#8aa0c8"/><path d="m1 6 14-3 1 3L2 10z" fill="#8fb3e6"/><path d="m19 5 4-3M19 14l4 4M22 2v16" stroke="#c87a60" stroke-width="1.500"/></symbol>
<symbol id="s5" viewBox="0 0 24 18"><path d="M4 2h16l3 14H1z" fill="#eef0f4" stroke="#4a5266" stroke-width="1.400"/><path d="M6 12 7 6h5v3M12 12h5V6h-2v3h-3M6 12h4V9h3" fill="none" stroke="#4a5266" stroke-width="1.200"/></symbol>
<symbol id="stA" viewBox="0 0 16 16"><path d="M.500.5h15v15H.500z" fill="#ddd" stroke="#aaa"/><path d="m3 4 4 8 2-8 3 8M3 10l9-5" stroke="#888" fill="none"/></symbol>
<symbol id="ball" viewBox="0 0 16 16"><circle cx="8" cy="9" r="6.500" fill="#2aa0b4"/><path d="m1 2 8-1 0 7z" fill="#d8382c"/><path d="m9 3 6 2-3 6-4-2z" fill="#8cc84a"/></symbol>
</defs>
</svg>

<header class="titlebar d-flex position-relative flex-shrink-0">
 <div class="progress-strip position-absolute"><i></i></div>
 <div class="tb-left d-flex align-items-center text-nowrap flex-grow-1">
  <span class="nxlogo ps-1">NX</span><span class="vsep"></span>
  <button class="qb ms-1 me-1" aria-label="Save"><svg class="i16"><use href="#save"/></svg></button><span class="vsep"></span>
  <button class="qb" aria-label="Undo"><svg class="i16"><use href="#undo"/></svg></button><button class="qb drop" aria-label="Undo list"><span class="tri sm opacity-50"></span></button><button class="qb me-1" aria-label="Redo"><svg class="i16"><use href="#redo"/></svg></button><span class="vsep"></span>
  <button class="qb" aria-label="Cut"><svg class="i16"><use href="#cut"/></svg></button><button class="qb" aria-label="Copy"><svg class="i16"><use href="#copy"/></svg></button><button class="qb" aria-label="Paste"><svg class="i16"><use href="#paste"/></svg></button><button class="qb" aria-label="Copy display"><svg class="i16"><use href="#cp2"/></svg></button><span class="vsep"></span>
  <button class="qb" aria-label="Spline"><svg class="i16"><use href="#spline"/></svg></button><button class="qb drop me-1" aria-label="Curve list"><span class="tri sm"></span></button><span class="vsep"></span>
  <button class="qb mx-1" aria-label="Erase"><svg class="i16"><use href="#tag"/></svg></button><span class="vsep"></span>
  <button class="d-flex align-items-center gap-1 ms-1"><svg class="i16"><use href="#switch"/></svg>Switch Window</button>
  <button class="d-flex align-items-center gap-1 ms-2"><svg class="i16"><use href="#win"/></svg>Window<span class="tri sm ms-1"></span></button>
  <button class="ms-2" aria-label="Customize"><svg width="9" height="9"><path d="M0 1h9" stroke="#111"/><path d="M1 3h7L4.500 8z" fill="#111"/></svg></button>
 </div>
 <div class="align-self-center pt-1">NX 12 - Modeling</div>
 <div class="tb-right d-flex justify-content-end align-items-center pe-1">
  <span class="brand me-4 pt-1">SIEMENS</span>
  <button class="ms-2 me-3" aria-label="Minimize"><svg width="16" height="16"><path d="M4 13h8" stroke="#333" stroke-width="2"/></svg></button>
  <button class="ms-1 me-3" aria-label="Restore"><svg width="16" height="16"><path d="M6 6V3h8v6h-3M2.500 6.500h8v7h-8zM2 7.500h9" fill="none" stroke="#333" stroke-width="1.300"/></svg></button>
  <button class="ms-1" aria-label="Close"><svg width="16" height="16"><path d="m3 3 10 11M13 3 3 14" stroke="#333" stroke-width="1.500"/></svg></button>
 </div>
</header>

<nav class="tabbar nav flex-nowrap flex-shrink-0 align-items-center">
 <a class="nav-link file" href="#">File</a><a class="nav-link" href="#">Home</a><a class="nav-link" href="#">Assemblies</a><a class="nav-link" href="#">Curve</a><a class="nav-link" href="#">Surface</a><a class="nav-link" href="#">Analysis</a><a class="nav-link active me-1" href="#">View</a><a class="nav-link" href="#">Render</a><a class="nav-link" href="#">Tools</a><a class="nav-link" href="#">PMI</a><a class="nav-link" href="#">Application</a><a class="nav-link" href="#">Animation Designer</a>
 <div class="findbox ms-auto d-flex align-items-center justify-content-between pe-1"><input type="text" aria-label="Find a Command" placeholder="Find a Command"><svg class="i16"><use href="#mag"/></svg></div>
 <button class="ms-2 me-2 ps-1" aria-label="Full screen"><svg class="i16"><use href="#full"/></svg></button>
 <button class="me-2 ps-1" aria-label="Collapse ribbon"><svg width="14" height="16"><path d="m1 9 6-5 6 5-2 4-4-4-4 4z" fill="#fff" stroke="#333" stroke-width="1.200"/></svg></button>
 <button class="me-1 ps-1" aria-label="Help"><svg class="i16"><use href="#help"/></svg></button>
</nav>

<section class="ribbon d-flex">
 <div class="rgroup g-window">
  <div class="rbody justify-content-center"><button class="rbtn"><svg class="i32"><use href="#winbig"/></svg>Window<span class="tri sm"></span></button></div>
  <div class="rlabel justify-content-between ps-1">Wind...<span class="tri sm"></span></div>
 </div>
 <div class="rgroup g-zoom">
  <div class="rbody flex-column ps-2 ms-1 pt-1">
   <button class="d-flex align-items-center gap-1 mt-1 ps-1"><svg width="22" height="22"><use href="#zoomb"/></svg>Zoom</button>
   <input class="nxbox scalebox pe-1" aria-label="Zoom scale" value="1.2397">
  </div>
  <div class="rlabel justify-content-between">Zoom<span class="tri sm"></span></div>
 </div>
 <div class="rgroup g-vis">
  <div class="rbody ps-2">
   <button class="rbtn w76"><svg class="i32"><use href="#shade"/></svg><span>Show<br>and Hide</span></button>
   <div class="laycol ps-2">
    <select class="nxselect d-block" aria-label="Work layer"><option>1</option></select>
    <button class="lrow px-0"><svg class="i16"><use href="#mvl"/></svg>Move to Layer</button>
    <button class="lrow px-0"><svg class="i16"><use href="#lay"/></svg>Layer Settings</button>
   </div>
   <button class="rbtn w64"><svg class="i32"><use href="#edsec"/></svg><span>Edit<br>Section</span></button>
   <button class="rbtn w64"><svg class="i32"><use href="#clsec"/></svg><span>Clip<br>Section</span></button>
   <button class="rbtn w76"><svg class="i32"><use href="#seeth"/></svg><span>See-Thru<br>All</span></button>
   <button class="rbtn w64"><span class="moreicon border rounded-1"><svg width="18" height="18"><use href="#shade"/></svg></span>More<span class="tri sm"></span></button>
  </div>
  <div class="rlabel"><span class="mx-auto pe-3">Visibility</span><span class="tri sm"></span></div>
 </div>
 <div class="rgroup g-visual">
  <div class="rbody ps-2">
   <button class="rbtn w98"><svg class="i32"><use href="#pref"/></svg>Preferences</button>
   <button class="rbtn w88"><svg class="i32"><use href="#palette"/></svg><span>Edit Object<br>Display</span></button>
   <button class="rbtn w60"><svg class="i32"><use href="#export"/></svg><span>Export<br>Image</span></button>
   <div class="viscol ps-1">
    <button class="lrow off"><svg class="i16"><use href="#capt"/></svg>Capture Studio Image</button>
    <button class="lrow"><svg class="i16"><use href="#editbg"/></svg>Edit Background</button>
    <button class="lrow on"><svg class="i16"><use href="#facee"/></svg>Face Edges</button>
   </div>
  </div>
  <div class="rlabel"><span class="mx-auto pe-3">Visualization</span><span class="tri sm"></span></div>
 </div>
 <div class="rgroup g-true">
  <div class="rbody justify-content-center"><button class="rbtn"><svg class="i32"><use href="#sphere"/></svg><span>True<br>Shading</span></button></div>
 </div>
 <button class="ms-auto align-self-end p-1 pb-2" aria-label="Ribbon options"><span class="tri sm d-block"></span></button>
</section>

<section class="selbar d-flex align-items-center">
 <button class="d-flex align-items-center gap-1 ms-2 me-2"><svg class="i16 ms-1"><use href="#menu"/></svg><span><u>M</u>enu</span><span class="tri sm ms-1"></span></button>
 <span class="vsep"></span>
 <select class="nxselect sel-filter ms-2 me-2" aria-label="Selection filter"><option>No Selection Filter</option></select>
 <select class="nxselect sel-scope" aria-label="Selection scope"><option>Entire Assembly</option></select>
 <button class="tool ms-1" aria-label="Interpart"><svg class="i16"><use href="#gA"/></svg></button>
 <button class="tool" aria-label="Reset filters"><svg class="i16"><use href="#gB"/></svg></button>
 <button class="tool mx-0" aria-label="Selection priority"><svg width="18" height="18"><use href="#selp"/></svg></button><button class="tool arrow mx-0" aria-label="More priorities"><span class="tri"></span></button>
 <button class="tool" aria-label="Snap pick"><svg class="i16"><use href="#gC"/></svg></button>
 <button class="tool" aria-label="Deselect"><svg class="i16"><use href="#gD"/></svg></button>
 <button class="tool" aria-label="Lasso"><svg class="i16"><use href="#lasso"/></svg></button>
 <button class="tool" aria-label="Rectangle"><svg class="i16"><use href="#marq"/></svg></button><button class="tool arrow" aria-label="More shapes"><span class="tri"></span></button>
 <button class="tool" aria-label="Hidden edges"><svg class="i16"><use href="#cubeg"/></svg></button>
 <button class="tool" aria-label="Solid"><svg class="i16"><use href="#cubeb"/></svg></button>
 <button class="tool on" aria-label="Enable snap"><svg width="18" height="18"><use href="#snap"/></svg></button>
 <button class="tool on" aria-label="End point"><svg class="i16"><use href="#ln1"/></svg></button>
 <button class="tool on" aria-label="Mid point"><svg class="i16"><use href="#ln2"/></svg></button>
 <button class="tool" aria-label="Control point"><svg class="i16"><use href="#cv1"/></svg></button>
 <button class="tool on" aria-label="Spline pole"><svg class="i16"><use href="#spl2"/></svg></button>
 <button class="tool on" aria-label="Defining point"><svg class="i16"><use href="#cv2"/></svg></button>
 <button class="tool" aria-label="Intersection"><svg class="i16"><use href="#crs"/></svg></button>
 <button class="tool on" aria-label="Arc center"><svg class="i16"><use href="#cir"/></svg></button>
 <button class="tool" aria-label="Quadrant"><svg class="i16"><use href="#quad"/></svg></button>
 <button class="tool on" aria-label="Existing point"><svg class="i16"><use href="#plus"/></svg></button>
 <button class="tool on" aria-label="Point on curve"><svg class="i16"><use href="#ln3"/></svg></button>
 <button class="tool" aria-label="Point on face"><svg class="i16"><use href="#face"/></svg></button>
 <button class="tool" aria-label="Facet vertex"><svg class="i16"><use href="#fac2"/></svg></button>
 <button class="tool" aria-label="Grid point"><svg class="i16"><use href="#grid"/></svg></button>
 <span class="vsep ms-1 me-2"></span>
 <button class="tool" aria-label="Fit"><svg class="i16"><use href="#fit"/></svg></button>
 <button class="tool" aria-label="Zoom view"><svg class="i16"><use href="#pic"/></svg></button>
 <button class="tool" aria-label="Rotate"><svg class="i16"><use href="#rot"/></svg></button>
 <button class="tool" aria-label="Pan"><svg class="i16"><use href="#pan"/></svg></button>
 <button class="tool" aria-label="Perspective"><svg class="i16"><use href="#gE"/></svg></button>
 <button class="tool" aria-label="Layout"><svg class="i16"><use href="#vw"/></svg></button><button class="tool arrow" aria-label="Layouts"><span class="tri"></span></button>
 <button class="tool" aria-label="Orient"><svg class="i16"><use href="#half"/></svg></button><button class="tool arrow" aria-label="Orientations"><span class="tri"></span></button>
 <button class="tool" aria-label="Shaded"><svg class="i16"><use href="#cubeb"/></svg></button><button class="tool arrow" aria-label="Render styles"><span class="tri"></span></button>
 <button class="tool" aria-label="Show and hide"><svg class="i16"><use href="#shade"/></svg></button><button class="tool arrow" aria-label="Visibility list"><span class="tri"></span></button>
 <span class="vsep ms-2 me-1"></span>
 <button class="tool" aria-label="Sweep"><svg class="i16"><use href="#pipe"/></svg></button>
 <button class="tool" aria-label="Point set"><svg class="i16"><use href="#gF"/></svg></button>
 <button class="tool" aria-label="Drafting"><svg class="i16"><use href="#gG"/></svg></button>
 <button class="tool" aria-label="Measure"><svg class="i16"><use href="#gH"/></svg></button>
 <button class="tool mx-0" aria-label="Surface"><svg class="i16"><use href="#green"/></svg></button><button class="tool arrow mx-0" aria-label="Surfaces"><span class="tri"></span></button>
 <button class="tool" aria-label="Swept"><svg class="i16"><use href="#swept"/></svg></button>
 <span class="vsep"></span>
 <button class="ms-auto align-self-end p-1 pb-2" aria-label="Bar options"><span class="tri sm d-block"></span></button>
</section>

<main class="work d-flex flex-grow-1">
 <div class="rail d-flex flex-column">
  <button class="gearbtn" aria-label="Settings"><svg class="i16"><use href="#gear"/></svg></button>
  <button aria-label="Assembly gears"><svg class="i24"><use href="#gears"/></svg></button>
  <button aria-label="Assembly Navigator"><svg class="i24"><use href="#asm"/></svg></button>
  <button aria-label="Constraint Navigator"><svg class="i24"><use href="#cons"/></svg></button>
  <button class="cur" aria-label="Part Navigator"><svg class="i24"><use href="#part"/></svg></button>
  <button aria-label="Reuse Library"><svg class="i24"><use href="#books"/></svg></button>
  <button class="mt-a" aria-label="HD3D Tools"><svg class="i24"><use href="#info"/></svg></button>
  <button class="mt-a" aria-label="Web Browser"><svg class="i24"><use href="#page"/></svg></button>
  <button class="mt-a" aria-label="History"><svg class="i24"><use href="#clock"/></svg></button>
  <button aria-label="Process Studio"><svg class="i24"><use href="#rainb"/></svg></button>
  <button aria-label="Machining Wizards"><svg class="i24"><use href="#mach"/></svg></button>
  <button aria-label="Roles"><svg class="i24"><use href="#robot"/></svg></button>
 </div>

 <aside class="navpanel d-flex flex-column">
  <div class="navtitle d-flex align-items-center justify-content-between">Part Navigator<button aria-label="Undock"><svg width="17" height="16"><path d="M1 1h15v14H1z" fill="#fff" stroke="#222" stroke-width="1.400"/><path d="M1 2h15" stroke="#222" stroke-width="3"/></svg></button></div>
  <div class="treebox minh d-flex flex-column flex-grow-1">
   <div class="treehead d-flex justify-content-between flex-shrink-0"><span class="d-flex align-items-center ps-2">Name<svg class="ms-3" width="16" height="9"><path d="m2 9 6-8 6 8z" fill="#111"/></svg></span><span class="corner"></span></div>
   <div class="minh d-flex flex-grow-1">
    <ul class="rows flex-grow-1">
     <li class="trow"><span class="exp ms-1 me-1">+</span><svg class="i16"><use href="#clock"/></svg><svg class="i16 me-1"><use href="#sheets"/></svg>Drawing</li>
     <li class="trow"><span class="exp ms-1 me-1">−</span><svg class="i16 me-1"><use href="#folder"/></svg>Model History</li>
     <li class="trow leaf"><span class="stub"></span><label class="dim"><input class="form-check-input" type="checkbox" checked><svg class="i16"><use href="#csys"/></svg>Datum Coordinate System (0)</label></li>
     <li class="trow leaf"><span class="stub"></span><label class="dim"><input class="form-check-input" type="checkbox" checked><svg class="i16"><use href="#sketch"/></svg>Sketch (1) "SKETCH_000"</label></li>
     <li class="trow leaf"><span class="stub"></span><label><input class="form-check-input" type="checkbox" checked><svg class="i16"><use href="#extr"/></svg>Extrude (2)</label></li>
     <li class="trow leaf"><span class="stub"></span><label class="dim"><input class="form-check-input" type="checkbox" checked><svg class="i16"><use href="#sketch"/></svg>Sketch (3) "SKETCH_001"</label></li>
     <li class="trow leaf"><span class="stub"></span><label class="dim"><input class="form-check-input" type="checkbox" checked><svg class="i16"><use href="#sketch"/></svg>Sketch (4) "SKETCH_002"</label></li>
     <li class="trow leaf"><span class="stub"></span><label><input class="form-check-input" type="checkbox" checked><svg class="i16"><use href="#swept"/></svg>Swept (5)</label></li>
     <li class="trow leaf"><span class="stub"></span><label class="dim"><input class="form-check-input" type="checkbox" checked><svg class="i16"><use href="#plane"/></svg>Datum Plane (6)</label></li>
     <li class="trow leaf"><span class="stub"></span><label class="dim"><input class="form-check-input" type="checkbox" checked><svg class="i16"><use href="#sketch"/></svg>Sketch (7) "SKETCH_003"</label></li>
     <li class="trow leaf"><span class="stub"></span><label><input class="form-check-input" type="checkbox" checked><svg class="i16"><use href="#extr"/></svg>Extrude (8)</label></li>
     <li class="trow leaf"><span class="stub"></span><label class="dim"><input class="form-check-input" type="checkbox" checked><svg class="i16"><use href="#sketch"/></svg>Sketch (9) "SKETCH_004"</label></li>
     <li class="trow leaf"><span class="stub"></span><label><input class="form-check-input" type="checkbox" checked><svg class="i16"><use href="#unite"/></svg>Unite (10)</label></li>
     <li class="trow leaf"><span class="stub"></span><label><input class="form-check-input" type="checkbox" checked><svg class="i16"><use href="#pipe"/></svg>Sweep (11)</label></li>
     <li class="trow leaf"><span class="stub"></span><label class="dim"><input class="form-check-input" type="checkbox" checked><svg class="i16"><use href="#sketch"/></svg>Sketch (12) "SKETCH_005"</label></li>
     <li class="trow leaf"><span class="stub"></span><label><input class="form-check-input" type="checkbox" checked><svg class="i16"><use href="#hole"/></svg>Simple Hole (13)</label></li>
     <li class="trow leaf"><span class="stub"></span><label><input class="form-check-input" type="checkbox" checked><svg class="i16"><use href="#thole"/></svg>Threaded Hole (14)</label></li>
     <li class="trow leaf"><span class="stub"></span><label><input class="form-check-input" type="checkbox" checked><svg class="i16"><use href="#chamf"/></svg>Chamfer (15)</label></li>
     <li class="trow leaf"><span class="stub"></span><label class="dim"><input class="form-check-input" type="checkbox" checked><svg class="i16"><use href="#sketch"/></svg>Sketch (16) "SKETCH_007"</label></li>
     <li class="trow leaf"><span class="stub"></span><label><input class="form-check-input" type="checkbox" checked><svg class="i16"><use href="#revol"/></svg>Revolve (17)</label></li>
     <li class="trow leaf"><span class="stub"></span><label><input class="form-check-input" type="checkbox" checked><svg class="i16"><use href="#blend"/></svg>Edge Blend (18)</label></li>
     <li class="trow leaf"><span class="stub"></span><label><input class="form-check-input" type="checkbox" checked><svg class="i16"><use href="#blend"/></svg>Edge Blend (19)</label></li>
     <li class="trow leaf"><span class="stub"></span><label class="dim"><input class="form-check-input" type="checkbox" checked><svg class="i16"><use href="#sketch"/></svg>Sketch (20) "SKETCH_008"</label></li>
     <li class="trow leaf"><span class="stub"></span><label><input class="form-check-input" type="checkbox" checked><svg class="i16"><use href="#extr"/></svg>Extrude (21)</label></li>
    </ul>
    <div class="vscroll d-flex flex-column">
     <button class="py-2" aria-label="Scroll up"><svg width="14" height="14"><path d="m2 10 5-5 5 5" fill="none" stroke="#444" stroke-width="2.500"/></svg></button>
     <div class="thumb"></div>
     <button class="py-1 mt-auto" aria-label="Scroll down"><svg width="14" height="14"><path d="m2 4 5 5 5-5" fill="none" stroke="#444" stroke-width="2.500"/></svg></button>
    </div>
   </div>
   <div class="hscroll d-flex flex-shrink-0">
    <button aria-label="Scroll left"><svg width="14" height="14"><path d="m9 2-5 5 5 5" fill="none" stroke="#444" stroke-width="2.500"/></svg></button>
    <div class="thumb"></div>
    <button class="ms-auto me-4" aria-label="Scroll right"><svg width="14" height="14"><path d="m3 2 5 5-5 5" fill="none" stroke="#444" stroke-width="2.500"/></svg></button>
   </div>
  </div>
  <div class="footbar"></div>
 </aside>

 <section class="d-flex flex-column flex-grow-1 overflow-hidden">
  <div class="doctabs d-flex"><a class="doctab" href="#"><svg class="i16"><use href="#prt"/></svg>NX08 1 PIPE WITH FLANGE.prt<svg width="10" height="12"><path d="M8 4V3L6 1H1v10h7V9M4 8l5-4" fill="none" stroke="#fff" stroke-width="1.500"/></svg><svg width="10" height="10"><path d="m1 1 8 8M9 1 1 9" stroke="#fff" stroke-width="2.500"/></svg></a></div>
  <div class="scene">
   <svg viewBox="410 259 1475 734" preserveAspectRatio="xMidYMid meet" role="img" aria-label="Pipe with flange">
    <path d="M1094 355h141v10h-141z" fill="#5a5a5a" stroke="#222"/><path d="M1095 355h12v9h-12zM1222 355h12v9h-12z" fill="#3c3c3c"/><path d="M1113 355v9M1215 355v9" stroke="#222"/>
    <circle cx="1164" cy="769" r="170" fill="url(#rim)"/>
    <clipPath id="pc"><circle cx="1164" cy="769" r="170"/></clipPath>
    <g clip-path="url(#pc)">
     <circle cx="1164" cy="736" r="177" fill="url(#bore)"/>
     <circle cx="1164" cy="736" r="177" fill="none" stroke="#555" stroke-width="6"/>
     <circle cx="1164" cy="736" r="177" fill="none" stroke="#777" stroke-width="2"/>
     <circle cx="1164" cy="735" r="174" fill="none" stroke="#111" stroke-width="1"/>
    </g>
    <path fill-rule="evenodd" d="M981 364h366a56 56 0 0 1 56 56v338a56 56 0 0 1-56 56H981a56 56 0 0 1-56-56V420a56 56 0 0 1 56-56zM961 421a21 21 0 1 0 42 0a21 21 0 1 0-42 0zM1326 421a21 21 0 1 0 42 0a21 21 0 1 0-42 0zM961 758a21 21 0 1 0 42 0a21 21 0 1 0-42 0zM1326 758a21 21 0 1 0 42 0a21 21 0 1 0-42 0z" fill="#6e6e6e" stroke="#1c1c1c" stroke-width="1"/>
    <circle cx="982" cy="421" r="20" fill="#d8d8d8"/><circle cx="1347" cy="421" r="20" fill="#d8d8d8"/>
    <path d="M993 742q-3 16 0 34l7-9v-20zM1335 742q3 16 0 34l-7-9v-20z" fill="#555"/><path d="M998 745v27M1330 745v27" stroke="#999"/><path d="M996 743v30M1332 743v30" stroke="#222"/>
    <circle cx="1164" cy="589" r="173" fill="none" stroke="#262626"/>
    <circle cx="1164" cy="589" r="131" fill="url(#bore)"/><circle cx="1164" cy="589" r="131" fill="url(#boretop)" stroke="#222"/>
    <path d="M1039 625c10-26 22-38 38-48M1289 625c-10-26-22-38-38-48" fill="none" stroke="#1c1c1c" opacity=".6"/><path d="M1108 555c35-12 77-12 112 0" fill="none" stroke="#3a3a3a" opacity=".7"/>
    <path d="M1095 700A141 141 0 0 1 1233 700A131 131 0 0 1 1095 700z" fill="#e1e1e1"/>
    <g class="mark-text"><text x="577" y="535" font-family="Noto Sans CJK SC,sans-serif" font-size="80" font-weight="300">莫西网</text><text x="816" y="534" font-family="Liberation Serif,serif" font-size="73">www.3dmox.com</text></g>
    <path d="M471 906h24v24h-24z" fill="#cfcfcf" stroke="#a8a8a8"/>
    <path d="M470 930v-32" stroke="#1740d0" stroke-width="2.500"/><path d="m466 901 4-12 4 12z" fill="#1740d0"/>
    <path d="M471 930h32" stroke="#c03c3c" stroke-width="2.500"/><path d="m500 926 12 4-12 4z" fill="#a83232"/>
    <circle cx="470" cy="930" r="4" fill="#8aa878" stroke="#567"/>
    <text x="465" y="889" font-family="Liberation Sans,sans-serif" font-size="13" fill="#1740d0">Z</text><text x="511" y="935" font-family="Liberation Sans,sans-serif" font-size="13" fill="#d03c3c">X</text>
   </svg>
  </div>
 </section>

 <div class="siderail d-flex flex-column align-items-center">
  <button aria-label="Through curves"><svg width="22" height="20"><use href="#s1"/></svg></button>
  <button class="h-auto py-2" aria-label="More surfaces"><span class="tri sm"></span></button>
  <button class="mt-1" aria-label="Sheet"><svg class="i24"><use href="#s2"/></svg></button>
  <button class="mt-1" aria-label="Offset face"><svg width="22" height="22"><use href="#s3"/></svg></button>
  <button class="mt-2" aria-label="Extend"><svg width="22" height="20"><use href="#s4"/></svg></button>
  <button class="mt-1" aria-label="Sketch plane"><svg width="24" height="18"><use href="#s5"/></svg></button>
  <hr class="w-100 my-1">
  <button class="mt-auto pe-3" aria-label="Expand"><svg width="6" height="9"><path d="M6 0v9L1 4.500z" fill="#111"/></svg></button>
 </div>
</main>

<footer class="statusbar d-flex align-items-center justify-content-between">
 <b>Select objects and use MB3, or double-click an object</b>
 <span class="d-flex align-items-center gap-1 pe-4"><svg class="i16"><use href="#stA"/></svg><svg class="i16 me-2"><use href="#full"/></svg><svg class="i16"><use href="#ball"/></svg></span>
</footer>
<script src="https://cdn.jsdelivr.net/npm/bootstrap@5.3.0/dist/js/bootstrap.bundle.min.js"></script>
</body>
</html>
